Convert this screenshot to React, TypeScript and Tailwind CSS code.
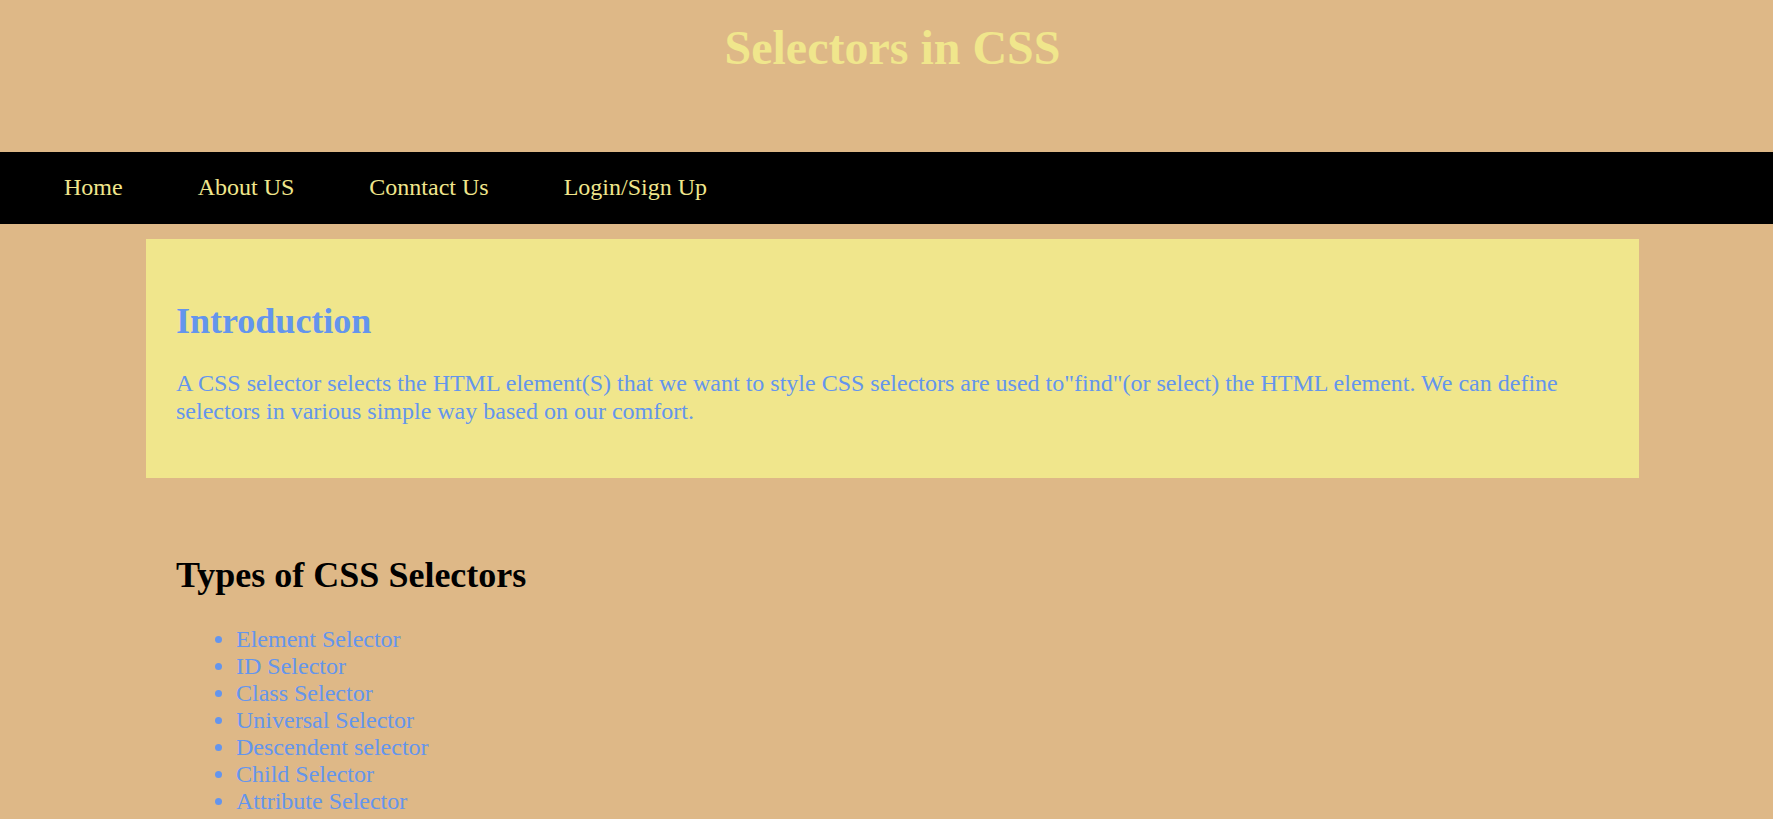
import React from "react";

const items = [
  "Element Selector",
  "ID Selector",
  "Class Selector",
  "Universal Selector",
  "Descendent selector",
  "Child Selector",
  "Attribute Selector",
];

export default function App() {
  return (
    <div
      className="h-screen overflow-hidden bg-[#DEB887] text-[24px] leading-[1.149]"
      style={{ fontFamily: '"Liberation Serif", "Times New Roman", serif' }}
    >
      <header className="h-[152px] pt-[20px] pl-[12px] text-center">
        <h1 className="text-[48px] font-bold text-[#F0E68C] leading-[1.149]">Selectors in CSS</h1>
      </header>
      <nav className="h-[72px] bg-black flex items-center pl-[64px] gap-[75px] text-[#F0E68C]">
        <a href="#">Home</a>
        <a href="#">About US</a>
        <a href="#">Conntact Us</a>
        <a href="#">Login/Sign Up</a>
      </nav>
      <section className="mt-[15px] ml-[146px] w-[1493px] bg-[#F0E68C] px-[30px] pt-[62px] pb-[53px] text-[#6495ED]">
        <h2 className="text-[36px] font-bold leading-[1.149]">Introduction</h2>
        <p className="mt-[28px]">
          A CSS selector selects the HTML element(S) that we want to style CSS selectors are used to"find"(or select) the HTML element. We can define selectors in various simple way based on our comfort.
        </p>
      </section>
      <section className="ml-[146px] px-[30px] pt-[77px]">
        <h2 className="text-[36px] font-bold leading-[1.149] text-black">Types of CSS Selectors</h2>
        <ul className="mt-[29px] list-disc pl-[60px] text-[#6495ED] leading-[27px]">
          {items.map((t) => (
            <li key={t}>{t}</li>
          ))}
        </ul>
      </section>
    </div>
  );
}
